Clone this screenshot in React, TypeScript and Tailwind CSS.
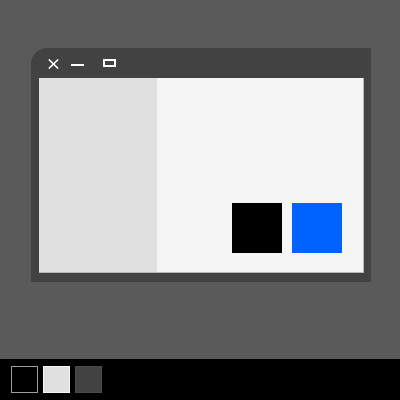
import React from 'react';

export default function App() {
  return (
    <div className="w-[400px] h-[400px] bg-[#5a5a5a] flex flex-col overflow-hidden">
      {/* Window */}
      <div className="pt-[48px] pl-[31px]">
        <div className="w-[340px] h-[234px] bg-[#424242] rounded-tl-[16px] flex flex-col">
          {/* Title bar */}
          <div className="h-[30px] flex items-center pl-[17px]">
            <svg width="11" height="10" viewBox="0 0 11 10" className="mr-[12px] mt-[1px]">
              <path d="M0.8 0.5 L10.2 9.5 M10.2 0.5 L0.8 9.5" stroke="#fff" strokeWidth="1.6" fill="none" />
            </svg>
            <div className="w-[13px] h-[2px] bg-white mt-[4px] mr-[19px]" />
            <div className="w-[13px] h-[8px] border-2 border-white" />
          </div>
          {/* Content */}
          <div className="flex-1 flex pl-[8px] pr-[7px] pb-[9px]">
            <div className="flex-1 flex border-r border-b border-[#b8b8b8]">
              <div className="w-[118px] bg-[#e0e0e0]" />
              <div className="flex-1 bg-[#f5f5f5] flex justify-end items-end gap-[10px] pr-[21px] pb-[19px]">
                <div className="w-[50px] h-[50px] bg-black" />
                <div className="w-[50px] h-[50px] bg-[#0062ff]" />
              </div>
            </div>
          </div>
        </div>
      </div>

      {/* Bottom palette bar */}
      <div className="mt-auto h-[41px] bg-black flex items-start pt-[7px] pl-[11px] gap-[5px]">
        <div className="w-[27px] h-[27px] bg-black border border-[#9e9e9e]" />
        <div className="w-[27px] h-[27px] bg-[#e0e0e0] border border-[#f5f5f5]" />
        <div className="w-[27px] h-[27px] bg-[#424242] border border-[#4a4a4a]" />
      </div>
    </div>
  );
}
